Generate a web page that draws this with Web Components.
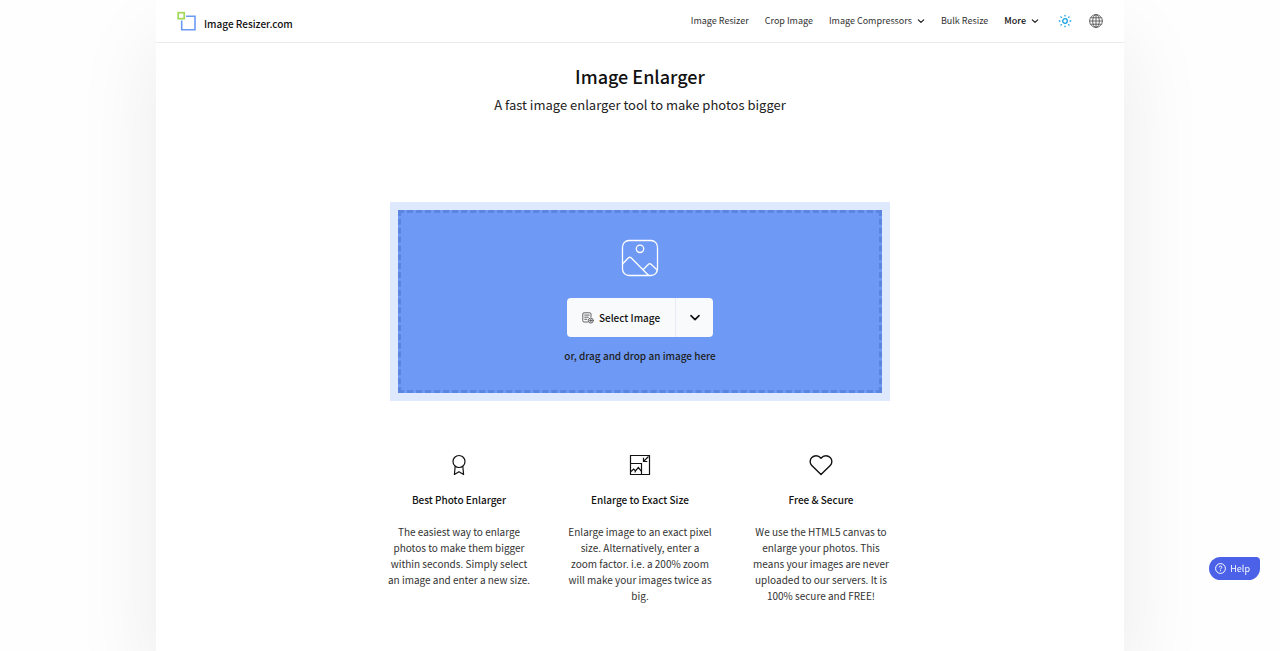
<!DOCTYPE html>
<html lang="en">
<head>
<meta charset="utf-8">
<meta name="viewport" content="width=device-width, initial-scale=1">
<title>Image Enlarger</title>
<style>
  html { background: #fefefe; }
  body {
    margin: 0;
    overflow-x: hidden;
    color: #1e1e1e;
    font: 10px/16px "Noto Sans CJK SC", "Noto Sans CJK JP", "Noto Sans", sans-serif;
  }
</style>
</head>
<body>
<image-app></image-app>

<script>
const define = (name, html) => {
  const template = document.createElement('template');
  template.innerHTML = html;
  customElements.define(name, class extends HTMLElement {
    constructor() {
      super();
      this.attachShadow({ mode: 'open' }).append(template.content.cloneNode(true));
    }
  });
};

define('site-logo', `
  <style>
    :host { display: block; }
    a { display: flex; align-items: center; gap: 8px; color: #111; text-decoration: none; font-weight: 500; }
    svg { display: block; }
    span { padding-top: 5px; }
  </style>
  <a href="#">
    <svg width="19" height="20" viewBox="0 0 19 20" fill="none" aria-hidden="true">
      <path d="M9 5.200h9v13.600H4.700V9.500" stroke="#6b9af5" stroke-width="1.600"/>
      <rect x="1.200" y="1.700" width="6" height="6" stroke="#a0d957" stroke-width="1.700"/>
    </svg>
    <span>Image Resizer.com</span>
  </a>`);

define('chevron-icon', `
  <style>
    :host { display: block; width: 8px; }
    svg { display: block; width: 100%; }
  </style>
  <svg viewBox="0 0 8 6" fill="none" stroke="currentColor" stroke-width="1.100" stroke-linecap="round" stroke-linejoin="round" aria-hidden="true"><path d="M1.300 1.800 4 4.400l2.700-2.600"/></svg>`);

define('nav-link', `
  <style>
    :host { display: block; }
    a { display: block; color: #333; text-decoration: none; font-size: 9px; }
  </style>
  <a href="#"><slot></slot></a>`);

define('nav-menu', `
  <style>
    :host { display: block; color: #333; }
    button { display: flex; align-items: center; gap: 5px; margin: 0; padding: 0; border: 0; background: none; color: inherit; font: inherit; font-size: 9px; cursor: pointer; }
    chevron-icon { color: #111; }
  </style>
  <button type="button" aria-haspopup="true"><slot></slot><chevron-icon></chevron-icon></button>`);

define('icon-button', `
  <style>
    :host { display: block; }
    button { display: block; margin: 0; padding: 0; border: 0; background: none; color: inherit; cursor: pointer; }
  </style>
  <button type="button"><slot></slot></button>`);

define('site-header', `
  <style>
    :host { display: flex; align-items: center; justify-content: space-between; height: 42px; padding: 0 21px; border-bottom: 1px solid #ebebeb; }
    nav { display: flex; align-items: center; gap: 16px; }
    .strong { color: #111; font-weight: 500; }
    .tools { display: flex; gap: 17px; margin-left: 3px; }
    svg { display: block; }
  </style>
  <site-logo></site-logo>
  <nav>
    <nav-link>Image Resizer</nav-link>
    <nav-link>Crop Image</nav-link>
    <nav-menu>Image Compressors</nav-menu>
    <nav-link>Bulk Resize</nav-link>
    <nav-menu class="strong">More</nav-menu>
    <div class="tools">
      <icon-button>
        <svg width="14" height="14" viewBox="0 0 14 14" fill="none" stroke="#109fe4" stroke-width="1.300" stroke-linecap="round" role="img" aria-label="Light theme">
          <circle cx="7" cy="7" r="2.300"/>
          <path d="M7 1.300v.600M7 12.100v.600M1.300 7h.600M12.100 7h.600M2.900 2.900l.500.500M10.600 10.600l.500.500M2.900 11.100l.500-.500M10.600 3.400l.500-.500"/>
        </svg>
      </icon-button>
      <icon-button>
        <svg width="14" height="14" viewBox="0 0 14 14" fill="none" stroke="#555" stroke-width=".9" role="img" aria-label="Language">
          <circle cx="7" cy="7" r="6.400"/><ellipse cx="7" cy="7" rx="3.300" ry="6.400"/>
          <path d="M7 .6v12.800M.6 7h12.800M1.500 3.800h11M1.500 10.200h11"/>
        </svg>
      </icon-button>
    </div>
  </nav>`);

define('page-title', `
  <style>
    :host { display: block; text-align: center; }
    h1 { margin: 0 0 1px; color: #111; font-size: 18px; line-height: 28px; font-weight: 500; }
    p { margin: 0; color: #222; font-size: 13px; line-height: 28px; }
  </style>
  <h1>Image Enlarger</h1>
  <p>A fast image enlarger tool to make photos bigger</p>`);

define('select-image', `
  <style>
    :host { display: flex; border-radius: 4px; overflow: hidden; background: #f8fafc; }
    button { display: flex; align-items: center; justify-content: center; height: 39px; margin: 0; border: 0; background: none; color: #111; font: inherit; font-weight: 500; cursor: pointer; }
    .pick { gap: 5px; padding: 0 15px; }
    .more { width: 38px; padding: 0; border-left: 1px solid #e6ebf5; }
    chevron-icon { width: 12px; }
  </style>
  <button type="button" class="pick">
    <svg width="12" height="12" viewBox="0 0 12 12" fill="none" stroke="#555" stroke-width=".9" stroke-linecap="round" aria-hidden="true">
      <path d="M5.600 10H2Q.8 10 .8 8.800V2Q.8.8 2 .8h5.800Q9 .8 9 2v3M2.700 3.100h4.500M2.700 5.200h3.600M2.700 7.300h2.200"/>
      <circle cx="8.800" cy="8.600" r="2.500"/><path d="M7.600 8.600h2.400M8.800 7.400v2.400"/>
    </svg>
    Select Image
  </button>
  <button type="button" class="more" aria-label="More sources"><chevron-icon></chevron-icon></button>`);

define('drop-zone', `
  <style>
    :host { display: block; padding: 8px; background: #dfe9fe; }
    .area { display: flex; flex-direction: column; align-items: center; padding: 26px 0; border: 3px dashed #5b86e0; background: #6e9af5; }
    svg { display: block; }
    select-image { margin: 21px 0 11px; }
    p { margin: 0; font-weight: 500; }
  </style>
  <div class="area">
    <svg width="38" height="38" viewBox="0 0 38 38" fill="none" stroke="#fff" stroke-width="1.300" stroke-linejoin="round" aria-hidden="true">
      <rect x="1.500" y="1.500" width="35" height="35" rx="6.500"/>
      <circle cx="19" cy="9.800" r="3.700"/>
      <path d="m1.500 25 6-6.200q1.300-1.200 2.600 0l17.500 17.700M22 30.700l5.500-5.500q1.300-1.200 2.600 0l6.300 6"/>
    </svg>
    <select-image></select-image>
    <p>or, drag and drop an image here</p>
  </div>`);

define('feature-card', `
  <style>
    :host { display: flex; flex-direction: column; align-items: center; text-align: center; }
    h2 { margin: 15px 0 16px; color: #111; font-size: inherit; font-weight: 500; }
    p { margin: 0; color: #333; }
  </style>
  <slot name="icon"></slot>
  <h2><slot name="title"></slot></h2>
  <p><slot></slot></p>`);

define('feature-list', `
  <style>
    :host { display: grid; grid-template-columns: repeat(3, 1fr); gap: 37px; margin: 0 -3px; }
    svg { display: block; }
  </style>
  <feature-card>
    <svg slot="icon" width="24" height="24" viewBox="0 0 24 24" fill="none" stroke="#111" stroke-width="1.200" stroke-linejoin="round" aria-hidden="true">
      <circle cx="12" cy="8.500" r="6"/><path d="M8.200 13.200 7.400 21.500 12 18.700l4.600 2.800-.8-8.300"/>
    </svg>
    <span slot="title">Best Photo Enlarger</span>
    The easiest way to enlarge photos to make them bigger within seconds. Simply select an image and enter a new size.
  </feature-card>
  <feature-card>
    <svg slot="icon" width="24" height="24" viewBox="0 0 24 24" fill="none" stroke="#111" stroke-width="1.200" aria-hidden="true">
      <path d="M2.500 2.500h19v19h-19zM2.500 10.500h11v11"/>
      <path d="M3 18.500l2.600-2.500 1.900 1.800 2.800-3.300 3 3.600M6.600 19.300l1-1M20.500 3.500l-5 5M15.500 4.800v3.700h3.800"/>
    </svg>
    <span slot="title">Enlarge to Exact Size</span>
    Enlarge image to an exact pixel size. Alternatively, enter a zoom factor. i.e. a 200% zoom will make your images twice as big.
  </feature-card>
  <feature-card>
    <svg slot="icon" width="24" height="24" viewBox="0 0 24 24" fill="none" stroke="#111" stroke-width="1.400" stroke-linejoin="round" aria-hidden="true">
      <path d="M12 21.500 2.800 12.400C.6 10.200.6 6.600 2.800 4.500s6.300-2.800 9.200.8c2.900-3.600 7-2.900 9.200-.8s2.200 5.700 0 7.900z"/>
    </svg>
    <span slot="title">Free &amp; Secure</span>
    We use the HTML5 canvas to enlarge your photos. This means your images are never uploaded to our servers. It is 100% secure and FREE!
  </feature-card>`);

define('help-button', `
  <style>
    :host { display: block; position: fixed; right: 20px; bottom: 71px; }
    button { display: flex; align-items: center; gap: 4px; height: 23px; margin: 0; padding: 0 10px 0 6px; border: 0; border-radius: 12px 4px 12px 12px; background: #4b61e8; color: #fff; font: inherit; font-size: 9px; cursor: pointer; }
  </style>
  <button type="button">
    <svg width="11" height="11" viewBox="0 0 11 11" fill="none" stroke="#fff" aria-hidden="true">
      <circle cx="5.500" cy="5.500" r="4.900"/><path d="M4.200 4.400q0-1.300 1.300-1.300t1.300 1.200c0 1-1.300.9-1.300 2.100M5.500 7.200v1"/>
    </svg>
    Help
  </button>`);

define('image-app', `
  <style>
    :host { display: block; }
    .sheet { box-sizing: border-box; max-width: 968px; min-height: 100vh; margin: 0 auto; background: #fff; box-shadow: 0 40px 80px rgba(0, 0, 0, .08); }
    main { max-width: 500px; margin: 0 auto; padding: 19px 0 46px; }
    drop-zone { margin: 83px 0 52px; }
  </style>
  <div class="sheet">
    <site-header></site-header>
    <main>
      <page-title></page-title>
      <drop-zone></drop-zone>
      <feature-list></feature-list>
    </main>
  </div>
  <help-button></help-button>`);
</script>
</body>
</html>
